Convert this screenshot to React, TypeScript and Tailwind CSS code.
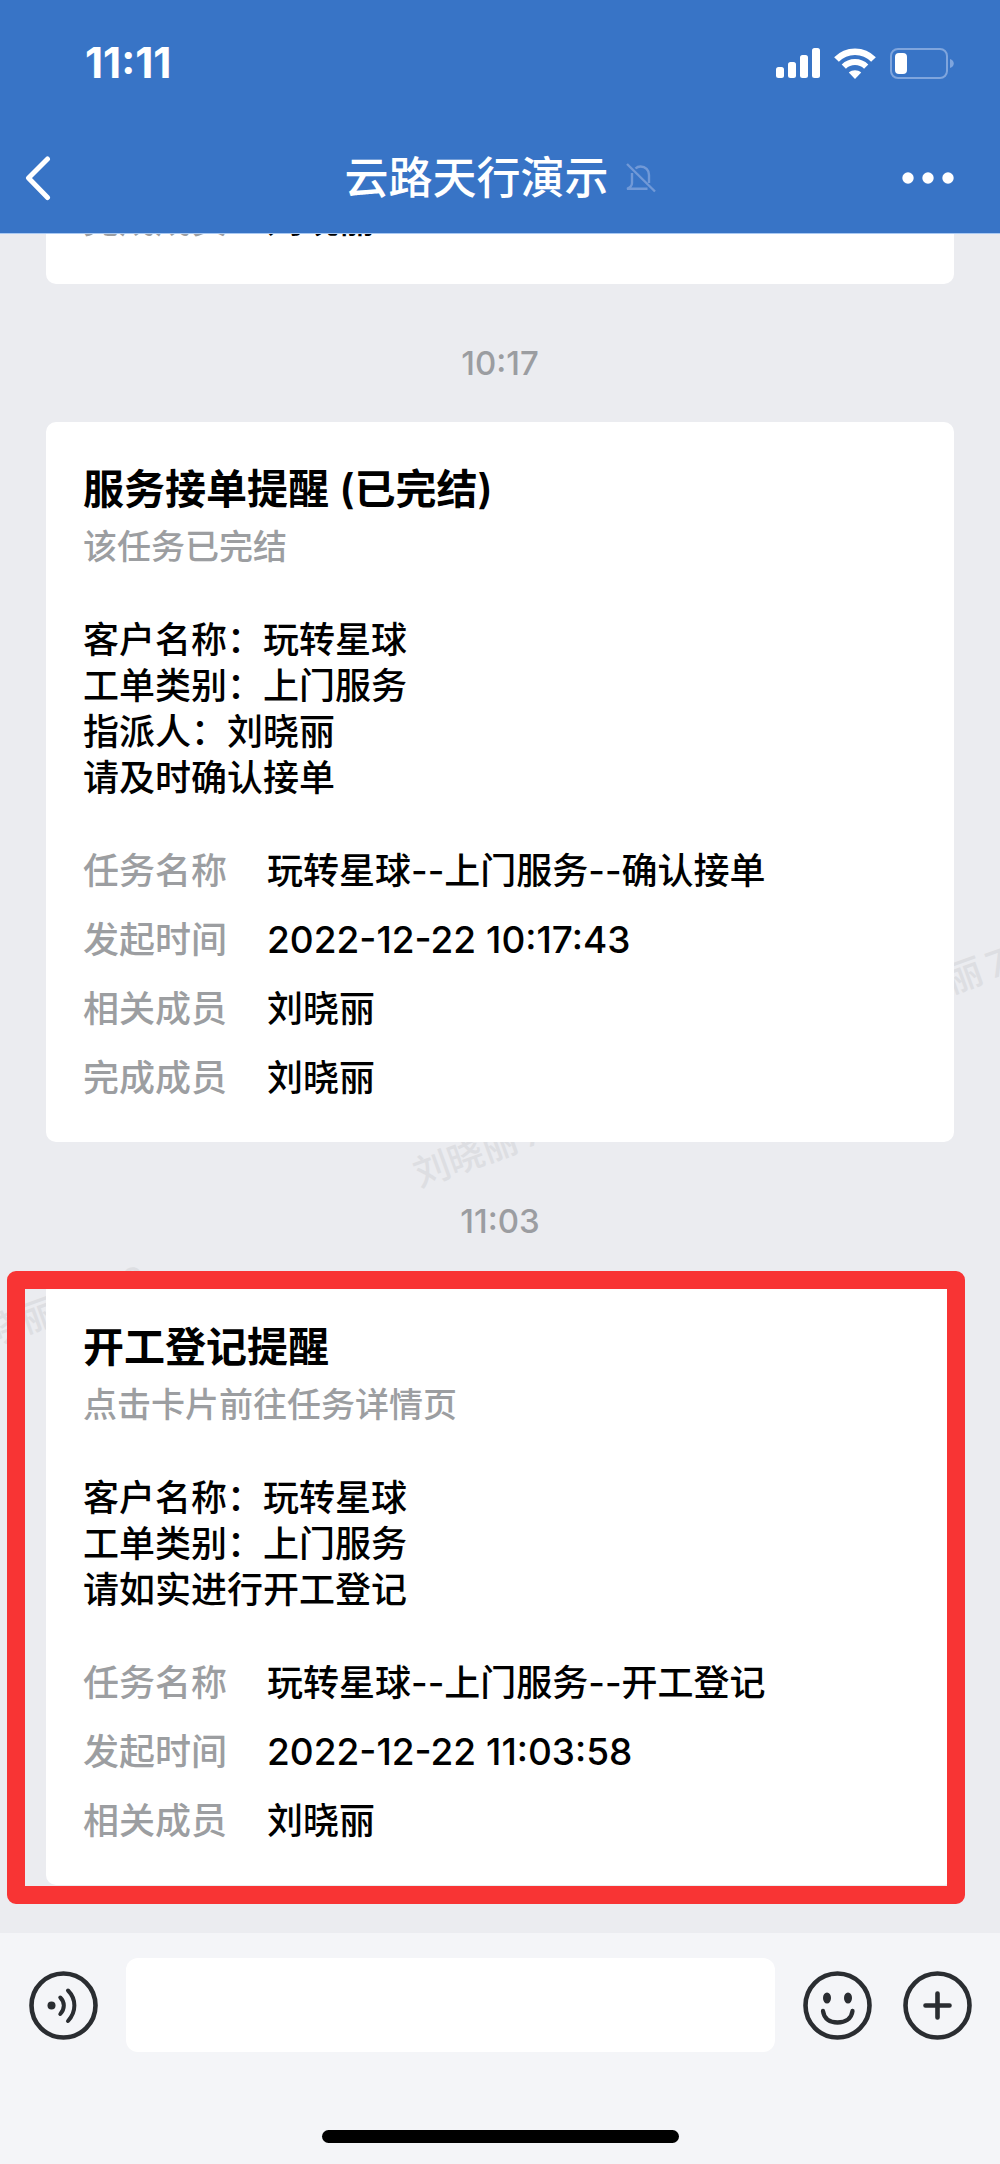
type Row = { label: string; value: string; isTime?: boolean };

type Notice = {
  title: string;
  subtitle: string;
  lines: string[];
  rows: Row[];
};

const accepted: Notice = {
  title: "服务接单提醒 (已完结)",
  subtitle: "该任务已完结",
  lines: ["客户名称：玩转星球", "工单类别：上门服务", "指派人：刘晓丽", "请及时确认接单"],
  rows: [
    { label: "任务名称", value: "玩转星球--上门服务--确认接单" },
    { label: "发起时间", value: "2022-12-22 10:17:43", isTime: true },
    { label: "相关成员", value: "刘晓丽" },
    { label: "完成成员", value: "刘晓丽" },
  ],
};

const started: Notice = {
  title: "开工登记提醒",
  subtitle: "点击卡片前往任务详情页",
  lines: ["客户名称：玩转星球", "工单类别：上门服务", "请如实进行开工登记"],
  rows: [
    { label: "任务名称", value: "玩转星球--上门服务--开工登记" },
    { label: "发起时间", value: "2022-12-22 11:03:58", isTime: true },
    { label: "相关成员", value: "刘晓丽" },
  ],
};

function Rows({ rows }: { rows: Row[] }) {
  return (
    <dl className="flex flex-col gap-[23px] text-[36px] leading-[46px]">
      {rows.map((row) => (
        <div key={row.label} className="flex">
          <dt className="w-[184px] shrink-0 text-[#9c9ea1]">{row.label}</dt>
          <dd className="min-w-0 text-black">
            {row.isTime ? <time className="block text-[37px]">{row.value}</time> : row.value}
          </dd>
        </div>
      ))}
    </dl>
  );
}

function NoticeCard({ notice }: { notice: Notice }) {
  return (
    <article className="rounded-[10px] bg-white px-[37px] pt-[37px] pb-[41px]">
      <h2 className="text-[41px] leading-[60px] font-semibold text-black">{notice.title}</h2>
      <p className="mt-[5px] text-[34px] leading-[46px] text-[#9c9ea1]">{notice.subtitle}</p>
      <div className="mt-[47px] mb-[47px] text-[36px] leading-[46px] text-black">
        {notice.lines.map((line) => (
          <p key={line}>{line}</p>
        ))}
      </div>
      <Rows rows={notice.rows} />
    </article>
  );
}

function TimeStamp({ children }: { children: string }) {
  return (
    <time className="relative block pt-[58px] pb-[38px] text-center text-[33px] leading-[42px] text-[#9b9da1]">
      {children}
    </time>
  );
}

function Watermark({ className }: { className: string }) {
  return (
    <span
      aria-hidden="true"
      className={`pointer-events-none absolute origin-left -rotate-20 text-[36px] leading-[40px] whitespace-nowrap text-[#dddee2] ${className}`}
    >
      刘晓丽{"\u2009"}7009
    </span>
  );
}

function StatusIcons() {
  return (
    <div className="flex items-center gap-[14px]">
      <svg width="44" height="30" viewBox="0 0 44 30" fill="#fff">
        <rect x="0" y="19" width="8" height="11" rx="2.5" />
        <rect x="12" y="14" width="8" height="16" rx="2.5" />
        <rect x="24" y="7" width="8" height="23" rx="2.5" />
        <rect x="36" y="0" width="8" height="30" rx="2.5" />
      </svg>
      <svg width="42" height="31" viewBox="0 0 42 31" fill="none">
        <path d="M2.5 11.5C12.5 1 29.5 1 39.5 11.5" stroke="#fff" strokeWidth="6.5" />
        <path d="M9.8 18.7C16 12.5 26 12.5 32.2 18.7" stroke="#fff" strokeWidth="6" />
        <path d="M21 31L14.8 24.6C18.3 21.5 23.7 21.5 27.2 24.6Z" fill="#fff" />
      </svg>
      <svg width="64" height="31" viewBox="0 0 64 31" fill="none">
        <rect x="1" y="1" width="56" height="29" rx="7" stroke="#7fa5dd" strokeWidth="2" />
        <rect x="5" y="5" width="12" height="21" rx="4" fill="#fff" />
        <path d="M60 11C65 12.5 65 18.5 60 20Z" fill="#7fa5dd" />
      </svg>
    </div>
  );
}

function MutedBell() {
  return (
    <svg width="30" height="30" viewBox="0 0 30 30" fill="none" stroke="#7199d7" strokeWidth="2.4" role="img" aria-label="消息免打扰">
      <path d="M1 1L29 28.5" />
      <path d="M9.5 5.5C11 4 13 3.5 14.5 3.5C19.5 3.5 23 7 23 12V20" />
      <path d="M6 10V20C6 22.5 4.5 24.5 1 25.8H21.5" />
    </svg>
  );
}

const ICON = "#2a2d31";

export default function App() {
  return (
    <div className="flex h-screen min-h-[900px] flex-col bg-[#ebecf0] font-['Inter','Noto_Sans_CJK_SC',sans-serif] font-medium">
      <header className="z-10 shrink-0 border-b border-[#a9c9f3] bg-[#3874c6] pb-[3px] text-white">
        <div className="flex h-[126px] items-center justify-between pr-[46px] pl-[85px]">
          <span className="text-[42px] leading-[46px] font-bold">11:11</span>
          <StatusIcons />
        </div>
        <div className="grid h-[104px] grid-cols-[1fr_auto_1fr] items-center">
          <button type="button" aria-label="返回" className="justify-self-start pl-[24px]">
            <svg width="28" height="46" viewBox="0 0 28 46" fill="none" stroke="#fff" strokeWidth="5" strokeLinecap="round" strokeLinejoin="round">
              <path d="M23.5 4L4.5 23L23.5 42.5" />
            </svg>
          </button>
          <div className="flex items-center gap-[17px]">
            <h1 className="text-[44px] leading-[60px]">云路天行演示</h1>
            <MutedBell />
          </div>
          <button type="button" aria-label="更多" className="justify-self-end pr-[46px]">
            <svg width="52" height="12" viewBox="0 0 52 12" fill="#fff">
              <circle cx="6" cy="6" r="5.7" />
              <circle cx="26" cy="6" r="5.7" />
              <circle cx="46" cy="6" r="5.7" />
            </svg>
          </button>
        </div>
      </header>

      <main className="relative flex min-h-0 flex-1 flex-col justify-end overflow-hidden px-[46px] pb-[48px]">
        <Watermark className="top-[921px] left-[415px]" />
        <Watermark className="top-[752px] left-[880px]" />
        <Watermark className="top-[1092px] left-[-46px]" />

        <article className="relative rounded-[10px] bg-white px-[37px] pb-[41px]">
          <Rows rows={[{ label: "完成成员", value: "刘晓丽" }]} />
        </article>
        <TimeStamp>10:17</TimeStamp>
        <div className="relative">
          <NoticeCard notice={accepted} />
        </div>
        <TimeStamp>11:03</TimeStamp>
        <div className="relative">
          <NoticeCard notice={started} />
          <div className="pointer-events-none absolute -top-[9px] -right-[11px] -bottom-[19px] -left-[39px] rounded-[9px] border-[18px] border-[#f83434]" />
        </div>
      </main>

      <footer className="shrink-0 bg-[#f4f5f8] pt-[25px]">
        <div className="flex items-center pr-[28px] pl-[29px]">
          <button type="button" aria-label="语音" className="shrink-0">
            <svg width="69" height="69" viewBox="0 0 69 69" fill="none" stroke={ICON} strokeWidth="4.6" strokeLinecap="round">
              <circle cx="34.5" cy="34.5" r="32" />
              <circle cx="22.5" cy="34.5" r="4" fill={ICON} stroke="none" />
              <path d="M31.3 26.5C36 31 36 38 31.3 43" strokeWidth="4" />
              <path d="M39 19.5C47.5 28 47.5 41 39 50" strokeWidth="4" />
            </svg>
          </button>
          <input type="text" aria-label="消息" className="mx-[28px] h-[94px] min-w-0 flex-1 rounded-[12px] bg-white px-6 text-[36px] outline-none" />
          <div className="flex shrink-0 gap-[31px]">
            <button type="button" aria-label="表情">
              <svg width="69" height="69" viewBox="0 0 69 69" fill="none" stroke={ICON} strokeWidth="4.6" strokeLinecap="round">
                <circle cx="34.5" cy="34.5" r="32" />
                <ellipse cx="24" cy="27" rx="4" ry="5.5" fill={ICON} stroke="none" />
                <ellipse cx="45" cy="27" rx="4" ry="5.5" fill={ICON} stroke="none" />
                <path d="M20 40C21 48 27 51.5 34.5 51.5S48.5 48 49.5 40" strokeWidth="4.3" />
              </svg>
            </button>
            <button type="button" aria-label="更多功能">
              <svg width="69" height="69" viewBox="0 0 69 69" fill="none" stroke={ICON} strokeWidth="4.6" strokeLinecap="round">
                <circle cx="34.5" cy="34.5" r="32" />
                <path d="M34.5 22.5V46.5M22.5 34.5H46.5" />
              </svg>
            </button>
          </div>
        </div>
        <div className="mx-auto mt-[78px] mb-[21px] h-[13px] w-[357px] max-w-full rounded-full bg-black" />
      </footer>
    </div>
  );
}
